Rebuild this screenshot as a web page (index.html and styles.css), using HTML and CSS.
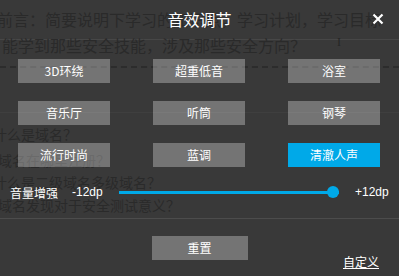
FILE: index.html
```
<!DOCTYPE html>
<html lang="zh">
<head>
<meta charset="utf-8">
<title>音效调节</title>
<link rel="stylesheet" href="styles.css">
</head>
<body>
<div class="stage">
  <div class="doc">
    <p class="d1">前言：简要说明下学习的知识点，学习计划，学习目标</p>
    <hr class="rule">
    <p class="d2">能学到那些安全技能，涉及那些安全方向？</p>
    <div class="dash"></div>
    <div class="rule2"></div>
    <p class="q q1">什么是域名？</p>
    <p class="q q2">域名在哪里注册？</p>
    <p class="q q3">什么是二级域名多级域名？</p>
    <p class="q q4">域名发现对于安全测试意义？</p>
    <span class="caret">I</span>
  </div>
  <div class="dialog">
    <div class="head">
      <span class="title">音效调节</span>
      <svg class="close" viewBox="0 0 12 12" width="12" height="12"><path d="M1.5 1.5 L10.5 10.5 M10.5 1.5 L1.5 10.5" stroke="#fff" stroke-width="2.2" fill="none"/></svg>
    </div>
    <div class="grid">
      <div class="btn">3D环绕</div>
      <div class="btn">超重低音</div>
      <div class="btn">浴室</div>
      <div class="btn">音乐厅</div>
      <div class="btn">听筒</div>
      <div class="btn">钢琴</div>
      <div class="btn">流行时尚</div>
      <div class="btn">蓝调</div>
      <div class="btn on">清澈人声</div>
    </div>
    <div class="slider-row">
      <span class="lbl">音量增强</span>
      <span class="num min">-12dp</span>
      <div class="track"><span class="knob"></span></div>
      <span class="num max">+12dp</span>
    </div>
    <div class="divider"></div>
    <div class="foot">
      <div class="btn reset">重置</div>
      <span class="custom">自定义</span>
    </div>
  </div>
</div>
</body>
</html>
```
FILE: styles.css
```
* { box-sizing: border-box; margin: 0; padding: 0; }
body { margin: 0; background: #393939; font-family: "Noto Sans CJK SC", sans-serif; }
.stage { position: relative; width: 399px; height: 276px; overflow: hidden; background: #393939; }

.doc { color: #2a2a2a; white-space: nowrap; }
.d1 { font-size: 16px; height: 39px; line-height: 39px; margin-left: -3px; }
.rule { border: 0; border-top: 1px solid #474747; height: 0; }
.d2 { font-size: 16px; height: 10px; line-height: 10px; margin-left: 2px; }
.dash { margin-top: 16px; border-top: 2px dashed #2c2c2c; }
.rule2 { margin-top: 44px; border-top: 1px solid #3f3f3f; }
.q { font-size: 14px; height: 22px; line-height: 22px; }
.q1 { margin-top: 10px; margin-left: -7px; }
.q2 { margin-top: 4px; margin-left: -2px; }
.q3 { margin-left: -7px; }
.q4 { margin-top: 1px; margin-left: -2px; }
.caret { position: absolute; left: 337px; top: 36px; font-family: "Liberation Serif", serif; font-size: 12px; line-height: 12px; color: #262626; }

.dialog { position: absolute; inset: 0; display: flex; flex-direction: column; color: #fff; }
.head { position: relative; height: 38px; display: flex; align-items: center; justify-content: center; font-size: 16px; }
.close { position: absolute; right: 15px; top: 13px; }

.grid { display: grid; grid-template-columns: repeat(3, 92px); column-gap: 43px; row-gap: 18px; margin: 21px 0 0 18px; }
.btn { height: 24px; background: rgba(255, 255, 255, 0.3); font-size: 12px; line-height: 24px; text-align: center; color: #fff; }
.btn.on { background: #00a9e8; }

.slider-row { display: flex; align-items: center; height: 24px; margin-top: 13px; padding-left: 10px; font-size: 12px; }
.lbl { width: 48px; white-space: nowrap; }
.num { font-family: "Liberation Sans", Arial, sans-serif; font-size: 12px; }
.min { margin-left: 14px; width: 31px; }
.track { position: relative; margin-left: 16px; width: 220px; height: 3px; background: #00a9e8; }
.knob { position: absolute; right: 0; top: 50%; width: 12px; height: 12px; margin-top: -6px; border-radius: 50%; background: #00a9e8; }
.max { margin-left: 16px; }

.divider { margin-top: 14px; height: 1px; background: #4c4c4c; }
.foot { display: grid; grid-template-columns: 1fr auto 1fr; margin-top: 17px; }
.reset { grid-column: 2; width: 96px; }
.custom { grid-column: 3; justify-self: end; margin-right: 20px; margin-top: 19px; font-size: 12px; line-height: 14px; text-decoration: underline; white-space: nowrap; }
```
